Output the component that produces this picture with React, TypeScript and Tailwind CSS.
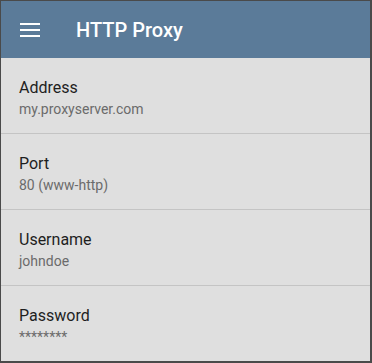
interface ISetting {
  label: string;
  value: string;
}

const settings: ISetting[] = [
  { label: "Address", value: "my.proxyserver.com" },
  { label: "Port", value: "80 (www-http)" },
  { label: "Username", value: "johndoe" },
  { label: "Password", value: "********" },
];

function SettingRow({ setting }: { setting: ISetting }) {
  return (
    <div className="border-b border-[#c4c4c4] pl-[18px] pt-[20px] pb-[14px] last:border-b-0">
      <div className="text-[16px] leading-5 text-[#1e1e1e]">{setting.label}</div>
      <div className="mt-[1px] text-[14px] leading-5 text-[#6b6b6b]">{setting.value}</div>
    </div>
  );
}

function App() {
  return (
    <div
      className="h-[363px] w-[372px] overflow-hidden border-t border-l border-r-2 border-b-2 border-[#4a4a4a] bg-[#dfdfdf]"
      style={{ fontFamily: "Roboto, 'Liberation Sans', sans-serif" }}
    >
      <header className="flex h-[57px] items-center bg-[#5b7b99] text-white">
        <svg className="ml-[19px]" width="20" height="14" viewBox="0 0 20 14" fill="white">
          <rect x="0" y="0" width="20" height="2" />
          <rect x="0" y="6" width="20" height="2" />
          <rect x="0" y="12" width="20" height="2" />
        </svg>
        <h1 className="ml-[36px] text-[20px] font-medium">HTTP Proxy</h1>
      </header>
      {settings.map((s) => (
        <SettingRow key={s.label} setting={s} />
      ))}
    </div>
  );
}

export default App;
